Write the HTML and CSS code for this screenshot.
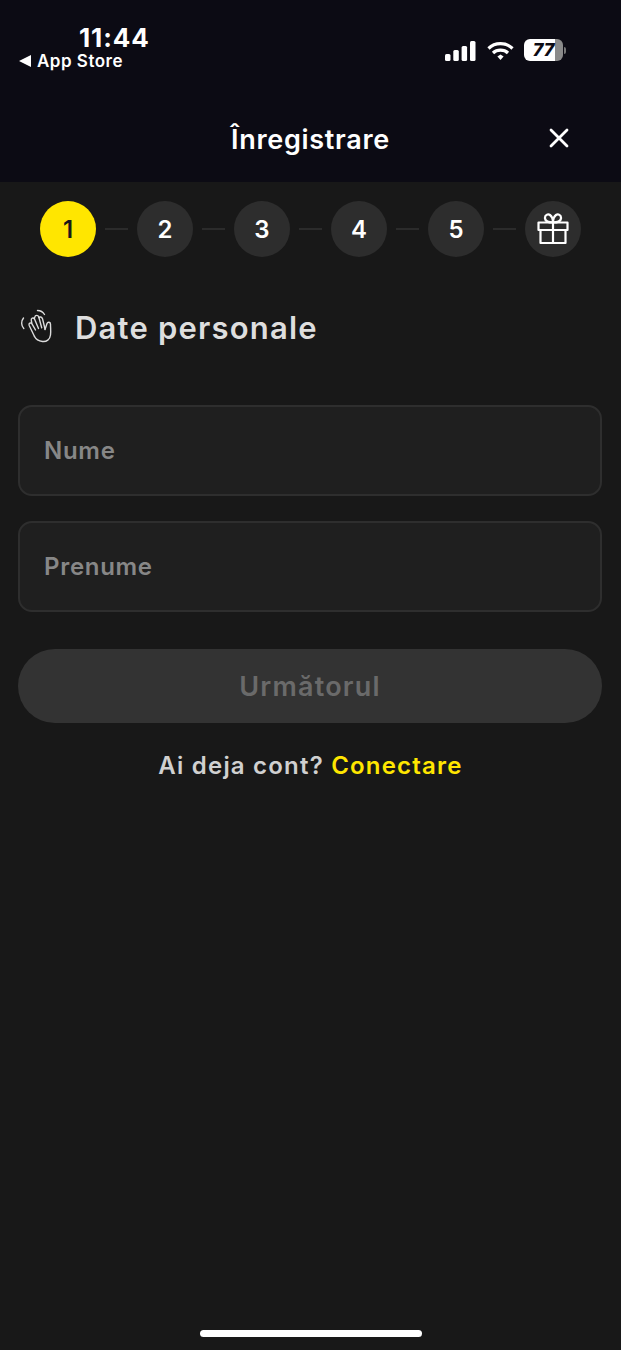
FILE: index.html
```html
<!DOCTYPE html>
<html>
<head>
    <title>Înregistrare</title>
    <link rel="stylesheet" href="styles.css">
</head>
<body>
    <div class="screen">
        <header class="top">
            <div class="status-bar">
                <div class="status-left">
                    <div class="time">11:44</div>
                    <div class="back-app"><span class="back-arrow"></span>App Store</div>
                </div>
                <div class="status-right">
                    <svg class="signal" width="31" height="20" viewBox="0 0 31 20">
                        <rect x="0" y="13" width="5.5" height="7" rx="1.5"/>
                        <rect x="8.3" y="9" width="5.5" height="11" rx="1.5"/>
                        <rect x="16.6" y="5" width="5.5" height="15" rx="1.5"/>
                        <rect x="25" y="0" width="5.5" height="20" rx="1.5"/>
                    </svg>
                    <svg class="wifi" width="27" height="20" viewBox="0 0 27 20" fill="none" stroke="#fff" stroke-width="3.2">
                        <path d="M1.5 7.5C8 1 19 1 25.5 7.5"/>
                        <path d="M6 12C10 8.2 17 8.2 21 12"/>
                        <path d="M10.4 15.6L13.5 13.6L16.6 15.6L13.5 19Z" fill="#fff" stroke="none"/>
                    </svg>
                    <div class="battery">
                        <div class="battery-body"><span class="battery-level">77</span></div>
                        <span class="battery-cap"></span>
                    </div>
                </div>
            </div>
            <div class="nav-bar">
                <h1>Înregistrare</h1>
                <svg class="close" width="20" height="20" viewBox="0 0 20 20" stroke="#fff" stroke-width="2.8" stroke-linecap="round">
                    <path d="M2 2L18 18M18 2L2 18"/>
                </svg>
            </div>
        </header>

        <main class="content">
            <div class="steps">
                <div class="step active">1</div>
                <span class="step-line"></span>
                <div class="step">2</div>
                <span class="step-line"></span>
                <div class="step">3</div>
                <span class="step-line"></span>
                <div class="step">4</div>
                <span class="step-line"></span>
                <div class="step">5</div>
                <span class="step-line"></span>
                <div class="step">
                    <svg width="32" height="32" viewBox="0 0 32 32" fill="none" stroke="#fff" stroke-width="2.2" stroke-linejoin="round">
                        <rect x="1.500" y="9.500" width="29" height="7.500"/>
                        <path d="M3.500 17V30H28.500V17"/>
                        <path d="M16 9.500V30"/>
                        <path d="M16 9.500C13 9.500 8.500 9 8 5.500C7.600 2 11 0.500 13 2C15 3.500 16 6.500 16 9.500Z"/>
                        <path d="M16 9.500C19 9.500 23.500 9 24 5.500C24.400 2 21 0.500 19 2C17 3.500 16 6.500 16 9.500Z"/>
                    </svg>
                </div>
            </div>

            <div class="section-title">
                <svg class="wave" width="40" height="40" viewBox="0 0 40 40" fill="none" stroke="#dcdcdc" stroke-width="1.400" stroke-linecap="round" stroke-linejoin="round">
                    <path d="M3.500 11C1 14 1 18.500 3.800 21.500"/>
                    <path d="M17.500 3.500C20.500 3.500 23 5 24.500 7.500"/>
                    <path d="M14.500 29.500L9.200 18.500C8.300 16.300 10.700 15 12 16.800L15.500 23"/>
                    <path d="M11.800 16L11.300 13.500C10.800 11.300 13.300 10 14.500 12L18.500 21.500"/>
                    <path d="M14.300 11.800L14.800 10C15.300 7.800 18 7.800 18.800 10L21.700 20.800"/>
                    <path d="M18.800 10.500C19.800 9.500 21.800 9.800 22.500 11.700L25 22"/>
                    <path d="M25 22.500L27 16.500C27.800 14.500 30.500 15 30.500 17.200C30.500 21 31 25 30.500 28C30 32.500 26.500 35 22.500 34.500C18.500 34 16 32.500 14.500 29.500"/>
                </svg>
                <h2>Date personale</h2>
            </div>

            <form class="form">
                <input class="field" type="text" placeholder="Nume">
                <input class="field" type="text" placeholder="Prenume">
                <button class="next" type="button" disabled>Următorul</button>
            </form>

            <p class="login">Ai deja cont? <a href="#">Conectare</a></p>
        </main>

        <div class="home-bar"></div>
    </div>
</body>
</html>
```

FILE: styles.css
```css
* {
    box-sizing: border-box;
}

html, body {
    margin: 0;
    height: 100%;
}

body {
    font-family: "Inter", "Noto Sans", sans-serif;
    background-color: #181818;
    color: #fff;
}

.screen {
    height: 1350px;
    display: flex;
    flex-direction: column;
    overflow: hidden;
}

.top {
    height: 182px;
    flex-shrink: 0;
    background-color: #0c0b14;
}

.status-bar {
    height: 99px;
    padding: 25px 55px 0 19px;
    display: flex;
    justify-content: space-between;
}

.status-left {
    display: flex;
    flex-direction: column;
    align-items: flex-start;
}

.time {
    margin-left: 60px;
    font-size: 26px;
    line-height: 26px;
    font-weight: 700;
    letter-spacing: 0.9px;
}

.back-app {
    display: flex;
    align-items: center;
    gap: 6px;
    font-size: 17px;
    line-height: 20px;
    font-weight: 600;
    letter-spacing: 0.5px;
}

.back-arrow {
    width: 0;
    height: 0;
    border-top: 6px solid transparent;
    border-bottom: 6px solid transparent;
    border-right: 12px solid #fff;
}

.status-right {
    display: flex;
    align-items: flex-start;
    gap: 11px;
    padding-top: 16px;
    fill: #fff;
}

.wifi {
    margin-right: -1px;
}

.battery {
    display: flex;
    align-items: center;
    gap: 1px;
    margin-top: -2px;
}

.battery-body {
    width: 39px;
    height: 22px;
    border-radius: 6px;
    background: linear-gradient(to right, #fff 79%, #8a8a8a 79%);
    color: #0c0b14;
    font-size: 18px;
    line-height: 22px;
    font-weight: 800;
    font-style: italic;
    text-align: center;
}

.battery-cap {
    width: 2px;
    height: 7px;
    border-radius: 0 2px 2px 0;
    background-color: #777;
}

.nav-bar {
    position: relative;
    height: 82px;
    display: flex;
    align-items: center;
    justify-content: center;
}

.nav-bar h1 {
    margin: 0 0 2px;
    font-size: 27px;
    font-weight: 600;
    letter-spacing: 0.7px;
}

.close {
    position: absolute;
    right: 52px;
    top: 29px;
}

.content {
    flex: 1;
    padding: 19px 18px 0;
}

.steps {
    display: flex;
    align-items: center;
    justify-content: center;
    gap: 9px;
}

.step {
    width: 56px;
    height: 56px;
    border-radius: 50%;
    background-color: #2d2d2d;
    display: flex;
    align-items: center;
    justify-content: center;
    font-size: 24px;
    font-weight: 600;
}

.step.active {
    background-color: #ffe600;
    color: #181818;
}

.step-line {
    width: 23px;
    height: 2px;
    background-color: #2b2b2b;
}

.section-title {
    margin-top: 50px;
    display: flex;
    align-items: center;
    gap: 15px;
    height: 40px;
    padding-left: 2px;
}

.section-title h2 {
    margin: 0;
    font-size: 31px;
    font-weight: 600;
    letter-spacing: 1.2px;
    color: #dedede;
}

.form {
    margin: 58px 1px 0 0;
    display: flex;
    flex-direction: column;
    gap: 25px;
}

.field {
    width: 100%;
    height: 91px;
    padding: 0 24px;
    background-color: #1f1f1f;
    border: 2px solid #2e2e2e;
    border-radius: 14px;
    font-family: inherit;
    font-size: 24px;
    font-weight: 600;
    letter-spacing: 0.7px;
    color: #fff;
}

.field::placeholder {
    color: #878787;
    opacity: 1;
}

.next {
    width: 100%;
    height: 74px;
    margin-top: 12px;
    border: none;
    border-radius: 37px;
    background-color: #333333;
    color: #6a6a6a;
    font-family: inherit;
    font-size: 27px;
    font-weight: 600;
    letter-spacing: 1.2px;
}

.login {
    margin: 26px 0 0;
    text-align: center;
    font-size: 24px;
    line-height: 34px;
    font-weight: 600;
    letter-spacing: 1.2px;
    color: #d0d0d0;
}

.login a {
    color: #ffe600;
    font-weight: 600;
    text-decoration: none;
}

.home-bar {
    width: 222px;
    height: 7px;
    flex-shrink: 0;
    align-self: center;
    margin-bottom: 13px;
    border-radius: 4px;
    background-color: #fff;
}
```
